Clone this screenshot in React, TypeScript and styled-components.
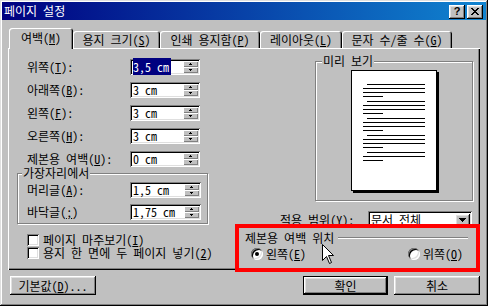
import React from 'react';
import styled, { createGlobalStyle, css } from 'styled-components';

const FONT = `"Noto Sans Mono CJK KR", "Noto Sans CJK KR", "DejaVu Sans", sans-serif`;

const Global = createGlobalStyle`
  html, body { margin: 0; padding: 0; background: #c0c0c0; }
  body { font-family: ${FONT}; font-size: 12px; color: #000; }
  * { box-sizing: border-box; }
`;

const raised = css`
  box-shadow: inset -1px -1px #000, inset 1px 1px #fff, inset -2px -2px #808080, inset 2px 2px #dfdfdf;
`;
const sunken = css`
  box-shadow: inset 1px 1px #808080, inset -1px -1px #fff, inset 2px 2px #000, inset -2px -2px #dfdfdf;
`;

const Window = styled.div`
  position: relative;
  width: 488px;
  height: 306px;
  padding: 2px;
  background: #c0c0c0;
  display: flex;
  flex-direction: column;
  box-shadow: inset -1px -1px #000, inset 1px 1px #dfdfdf, inset -2px -2px #808080, inset 2px 2px #fff;
`;

const TitleBar = styled.div`
  height: 18px;
  display: flex;
  align-items: center;
  justify-content: space-between;
  padding: 0 3px 0 2px;
  background: linear-gradient(to right, #000080, #1084d0);
`;

const Title = styled.span`
  color: #fff;
  line-height: 12px;
`;

const Controls = styled.div`
  display: flex;
  gap: 2px;
  margin-top: 1px;
`;

const CtlButton = styled.div`
  width: 16px;
  height: 14px;
  background: #c0c0c0;
  display: flex;
  align-items: center;
  justify-content: center;
  font-family: "Liberation Sans", sans-serif;
  font-weight: bold;
  font-size: 11px;
  line-height: 11px;
  ${raised}
`;

const Body = styled.div`
  display: flex;
  flex-direction: column;
  padding: 8px 0 0 6px;
`;

const TabStrip = styled.div`
  position: relative;
  z-index: 1;
  display: flex;
  align-items: flex-end;
  height: 20px;
  padding-left: 1px;
`;

const Tab = styled.div<{ $w: number; $active?: boolean }>`
  flex: 0 0 ${(p) => p.$w}px;
  height: ${(p) => (p.$active ? 21 : 17)}px;
  margin-bottom: ${(p) => (p.$active ? -1 : 0)}px;
  padding-bottom: ${(p) => (p.$active ? 2 : 0)}px;
  display: flex;
  align-items: center;
  justify-content: center;
  background: #c0c0c0;
  border-radius: 3px 3px 0 0;
  line-height: 12px;
  white-space: pre;
  box-shadow: inset 1px 1px #fff, inset -1px 0 #000, inset -2px 0 #808080;
`;

const U = styled.span`
  text-decoration: underline;
  text-underline-offset: 1px;
`;

const Panel = styled.div`
  width: 472px;
  height: 222px;
  background: #c0c0c0;
  display: grid;
  grid-template-columns: 227px 1fr;
  box-shadow: inset 1px 1px #fff, inset -1px -1px #000, inset -2px -2px #808080;
`;

const LeftCol = styled.div`
  display: flex;
  flex-direction: column;
  padding: 11px 0 0 9px;
`;

const RowStack = styled.div`
  display: flex;
  flex-direction: column;
  gap: 7px;
  padding-left: 10px;
`;

const FieldRow = styled.div`
  display: flex;
  align-items: center;
  height: 16px;
`;

const Label = styled.span<{ $w?: number }>`
  flex: 0 0 ${(p) => p.$w ?? 103}px;
  line-height: 12px;
  white-space: pre;
`;

const Field = styled.div<{ $w?: number }>`
  width: ${(p) => p.$w ?? 70}px;
  height: 16px;
  background: #fff;
  display: flex;
  align-items: center;
  padding: 2px 2px 2px 3px;
  ${sunken}
`;

const FieldText = styled.span<{ $sel?: boolean }>`
  flex: 1;
  line-height: 12px;
  white-space: pre;
  span {
    background: ${(p) => (p.$sel ? '#000080' : 'transparent')};
    color: ${(p) => (p.$sel ? '#fff' : '#000')};
    padding-right: 2px;
  }
`;

const Spinner = styled.div`
  width: 15px;
  height: 12px;
  display: flex;
  flex-direction: column;
`;

const SpinHalf = styled.div`
  flex: 1;
  background: #c0c0c0;
  display: flex;
  align-items: center;
  justify-content: center;
  box-shadow: inset 1px 1px #fff, inset -1px -1px #808080;
`;

const Group = styled.div<{ $w: number; $h: number }>`
  width: ${(p) => p.$w}px;
  height: ${(p) => p.$h}px;
  margin-top: 6px;
  border: 1px solid #808080;
  box-shadow: inset 1px 1px #fff, 1px 1px #fff;
  display: flex;
  flex-direction: column;
`;

const Legend = styled.span<{ $ml?: number }>`
  align-self: flex-start;
  margin: -7px 0 0 ${(p) => p.$ml ?? 4}px;
  padding: 0 1px;
  background: #c0c0c0;
  line-height: 12px;
  white-space: pre;
`;

const GroupRows = styled.div`
  display: flex;
  flex-direction: column;
  gap: 6px;
  margin-top: 3px;
  padding-left: 9px;
`;

const Checks = styled.div`
  display: flex;
  flex-direction: column;
  margin-top: 10px;
  padding-left: 10px;
`;

const CheckRow = styled.div`
  display: flex;
  align-items: flex-start;
  gap: 4px;
  height: 13px;
  line-height: 12px;
  white-space: pre;
`;

const CheckBox = styled.div`
  width: 12px;
  height: 12px;
  background: #fff;
  ${sunken}
`;

const RightCol = styled.div`
  display: flex;
  flex-direction: column;
  padding-top: 13px;
`;

const Preview = styled(Group)`
  margin: 0 0 0 80px;
  align-items: center;
`;

const PreviewLegend = styled(Legend)`
  align-self: flex-start;
`;

const Page = styled.div`
  width: 86px;
  height: 121px;
  margin-top: 3px;
  background: #fff;
  border: 1px solid #000;
  box-shadow: 2px 2px 0 #000;
  padding: 13px 0 0 11px;
  display: flex;
  flex-direction: column;
  gap: 4px;
`;

const Para = styled.div`
  display: flex;
  flex-direction: column;
  gap: 3px;
`;

const Line = styled.div<{ $kind: 'indent' | 'full' | 'short' }>`
  height: 1px;
  background: #000;
  margin-left: ${(p) => (p.$kind === 'indent' ? 4 : 0)}px;
  width: ${(p) => (p.$kind === 'indent' ? 58 : p.$kind === 'full' ? 62 : 20)}px;
`;

const ScopeRow = styled.div`
  display: flex;
  align-items: center;
  margin: 10px 0 0 45px;
  height: 17px;
`;

const Combo = styled.div`
  width: 104px;
  height: 17px;
  background: #fff;
  display: flex;
  align-items: center;
  padding: 2px 2px 1px 3px;
  ${sunken}
`;

const ComboText = styled.span`
  flex: 1;
  line-height: 12px;
  white-space: pre;
`;

const DropButton = styled.div`
  width: 15px;
  height: 13px;
  background: #c0c0c0;
  display: flex;
  align-items: center;
  justify-content: center;
  ${raised}
`;

const GutterTitle = styled.div`
  display: flex;
  align-items: center;
  margin-top: 4px;
  padding: 0 12px 0 10px;
  height: 12px;
`;

const GutterText = styled.span`
  line-height: 12px;
  white-space: pre;
`;

const Etch = styled.div`
  flex: 1;
  margin-left: 4px;
  height: 2px;
  border-top: 1px solid #808080;
  border-bottom: 1px solid #fff;
`;

const RadioRow = styled.div`
  display: flex;
  justify-content: space-between;
  margin-top: 4px;
  padding: 0 17px 0 16px;
`;

const RadioItem = styled.div`
  display: flex;
  align-items: center;
  gap: 3px;
  height: 12px;
  line-height: 12px;
  white-space: pre;
`;

const Radio = styled.div<{ $on?: boolean }>`
  width: 12px;
  height: 12px;
  border-radius: 50%;
  background: #fff;
  display: flex;
  align-items: center;
  justify-content: center;
  box-shadow: inset 1px 1px #808080, inset -1px -1px #fff, inset 2px 2px #000, inset -2px -2px #dfdfdf;
  &::after {
    content: '';
    width: 4px;
    height: 4px;
    border-radius: 50%;
    background: ${(p) => (p.$on ? '#000' : 'transparent')};
  }
`;

const ButtonRow = styled.div`
  display: flex;
  width: 472px;
  margin-top: 6px;
  padding-left: 2px;
  gap: 6px;
`;

const Button = styled.div<{ $w: number; $default?: boolean; $push?: boolean }>`
  width: ${(p) => p.$w}px;
  height: 19px;
  margin-left: ${(p) => (p.$push ? 'auto' : '0')};
  background: #c0c0c0;
  display: flex;
  align-items: center;
  justify-content: center;
  line-height: 12px;
  white-space: pre;
  ${(p) =>
    p.$default
      ? css`
          box-shadow: inset 0 0 0 1px #000, inset -2px -2px #000, inset 2px 2px #fff, inset -3px -3px #808080,
            inset 3px 3px #dfdfdf;
        `
      : raised}
`;

const Annotation = styled.div`
  position: absolute;
  left: 235px;
  top: 224px;
  width: 245px;
  height: 48px;
  border: 4px solid #ff0000;
  pointer-events: none;
`;

const Cursor = styled.svg`
  position: absolute;
  left: 322px;
  top: 244px;
`;

const Spin = () => (
  <Spinner>
    <SpinHalf>
      <svg width="3" height="2" viewBox="0 0 3 2"><path d="M1 0h1v1h1v1H0V1h1z" fill="#000" /></svg>
    </SpinHalf>
    <SpinHalf>
      <svg width="3" height="2" viewBox="0 0 3 2"><path d="M0 0h3v1H2v1H1V1H0z" fill="#000" /></svg>
    </SpinHalf>
  </Spinner>
);

const tabs = [
  { label: '여백', key: 'M', w: 64, active: true },
  { label: '용지 크기', key: 'S', w: 87 },
  { label: '인쇄 용지함', key: 'P', w: 100 },
  { label: '레이아웃', key: 'L', w: 82 },
  { label: '문자 수/줄 수', key: 'G', w: 110 },
];

const margins = [
  { label: '위쪽', key: 'T', value: '3,5 cm', sel: true },
  { label: '아래쪽', key: 'B', value: '3 cm' },
  { label: '왼쪽', key: 'F', value: '3 cm' },
  { label: '오른쪽', key: 'H', value: '3 cm' },
  { label: '제본용 여백', key: 'U', value: '0 cm' },
];

const headerFooter = [
  { label: '머리글', key: 'A', colon: ':', value: '1,5 cm' },
  { label: '바닥글', key: ';', colon: '', value: '1,75 cm' },
];

const paragraphs: Array<Array<'indent' | 'full' | 'short'>> = [
  ['indent', 'full', 'full', 'short'],
  ['indent', 'full', 'full', 'short'],
  ['indent', 'full', 'full', 'short'],
  ['indent', 'full', 'full', 'short'],
  ['indent', 'full', 'short'],
];

export default function App() {
  return (
    <>
      <Global />
      <Window>
        <TitleBar>
          <Title>페이지 설정</Title>
          <Controls>
            <CtlButton>?</CtlButton>
            <CtlButton>
              <svg width="8" height="7" viewBox="0 0 8 7">
                <path d="M0 0h2v1h1v1h2V1h1V0h2v1H7v1H6v1H5v1h1v1h1v1h1v1H6V6H5V5H3v1H2v1H0V6h1V5h1V4h1V3H2V2H1V1H0z" fill="#000" />
              </svg>
            </CtlButton>
          </Controls>
        </TitleBar>
        <Body>
          <TabStrip>
            {tabs.map((t) => (
              <Tab key={t.key} $w={t.w} $active={t.active}>
                {t.label}(<U>{t.key}</U>)
              </Tab>
            ))}
          </TabStrip>
          <Panel>
            <LeftCol>
              <RowStack>
                {margins.map((m) => (
                  <FieldRow key={m.key}>
                    <Label>
                      {m.label}(<U>{m.key}</U>):
                    </Label>
                    <Field>
                      <FieldText $sel={m.sel}>
                        <span>{m.value}</span>
                      </FieldText>
                      <Spin />
                    </Field>
                  </FieldRow>
                ))}
              </RowStack>
              <Group $w={191} $h={51}>
                <Legend>가장자리에서</Legend>
                <GroupRows>
                  {headerFooter.map((h) => (
                    <FieldRow key={h.key}>
                      <Label>
                        {h.label}(<U>{h.key}</U>){h.colon}
                      </Label>
                      <Field $w={71}>
                        <FieldText>
                          <span>{h.value}</span>
                        </FieldText>
                        <Spin />
                      </Field>
                    </FieldRow>
                  ))}
                </GroupRows>
              </Group>
              <Checks>
                <CheckRow>
                  <CheckBox />
                  <span>
                    페이지 마주보기(<U>I</U>)
                  </span>
                </CheckRow>
                <CheckRow>
                  <CheckBox />
                  <span>
                    용지 한 면에 두 페이지 넣기(<U>2</U>)
                  </span>
                </CheckRow>
              </Checks>
            </LeftCol>
            <RightCol>
              <Preview $w={158} $h={140}>
                <PreviewLegend $ml={6}>미리 보기</PreviewLegend>
                <Page>
                  {paragraphs.map((p, i) => (
                    <Para key={i}>
                      {p.map((k, j) => (
                        <Line key={j} $kind={k} />
                      ))}
                    </Para>
                  ))}
                </Page>
              </Preview>
              <ScopeRow>
                <Label $w={88}>
                  적용 범위(<U>Y</U>):
                </Label>
                <Combo>
                  <ComboText>문서 전체</ComboText>
                  <DropButton>
                    <svg width="7" height="4" viewBox="0 0 7 4">
                      <path d="M0 0h7v1H6v1H5v1H4v1H3V3H2V2H1V1H0z" fill="#000" />
                    </svg>
                  </DropButton>
                </Combo>
              </ScopeRow>
              <GutterTitle>
                <GutterText>제본용 여백 위치</GutterText>
                <Etch />
              </GutterTitle>
              <RadioRow>
                <RadioItem>
                  <Radio $on />
                  <span>
                    왼쪽(<U>E</U>)
                  </span>
                </RadioItem>
                <RadioItem>
                  <Radio />
                  <span>
                    위쪽(<U>O</U>)
                  </span>
                </RadioItem>
              </RadioRow>
            </RightCol>
          </Panel>
          <ButtonRow>
            <Button $w={86}>
              기본값(<U>D</U>)...
            </Button>
            <Button $w={85} $default $push>
              확인
            </Button>
            <Button $w={86}>취소</Button>
          </ButtonRow>
        </Body>
        <Annotation />
        <Cursor width="12" height="20" viewBox="0 0 12 20">
          <path d="M0.5 0.5 L0.5 16.5 L4.5 12.5 L7.5 19.5 L9.5 18.5 L6.5 11.5 L11.5 11.5 Z" fill="#fff" stroke="#000" strokeWidth="1" />
        </Cursor>
      </Window>
    </>
  );
}
